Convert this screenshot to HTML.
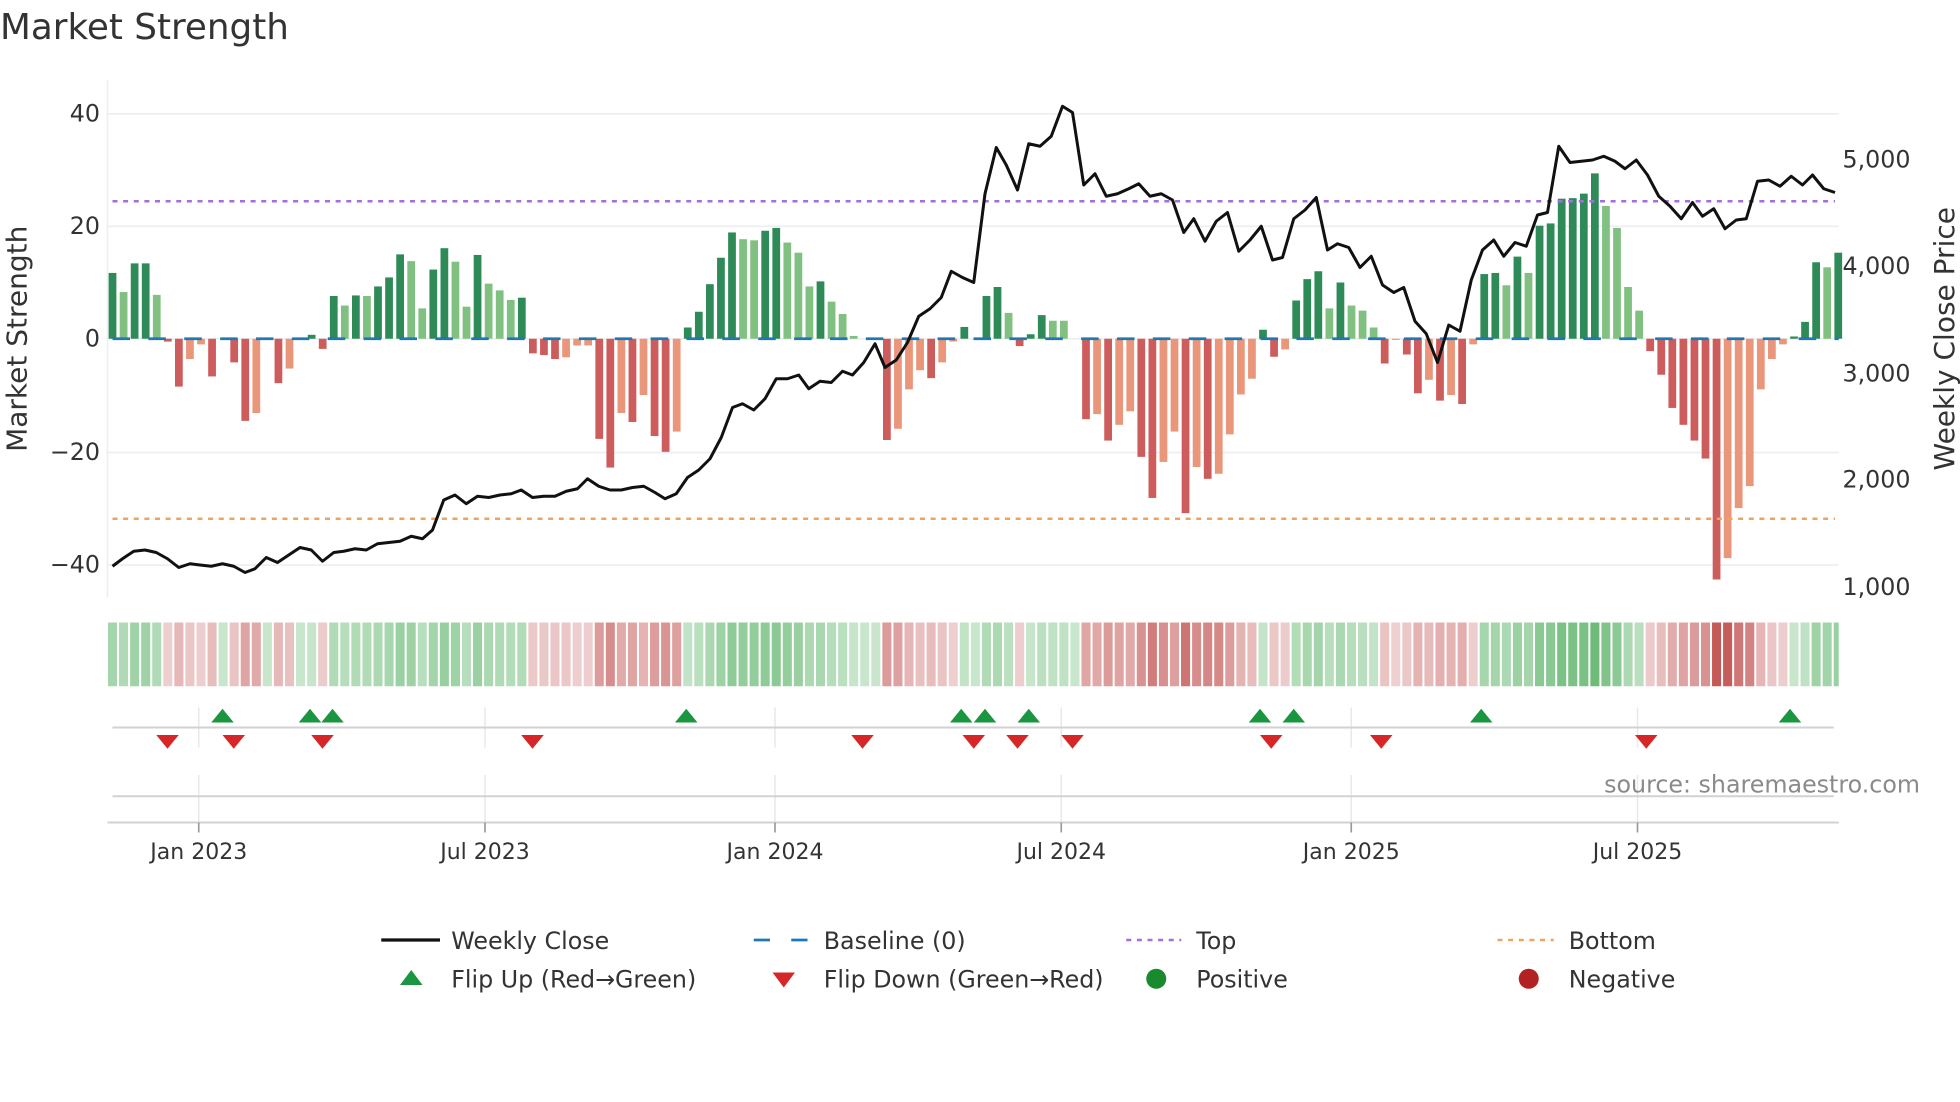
<!DOCTYPE html>
<html><head><meta charset="utf-8"><style>
html,body{margin:0;padding:0;background:#fff;}
svg{display:block;font-family:"DejaVu Sans","Liberation Sans",sans-serif;}
</style></head><body>
<svg id="s" width="1960" height="1102" viewBox="0 0 1568 881.6" xmlns="http://www.w3.org/2000/svg">
<text x="0" y="31" font-size="28.6" fill="#333">Market Strength</text>
<g stroke="#eceef1" stroke-width="1.3">
<line x1="86" y1="91" x2="1471" y2="91"/><line x1="86" y1="181" x2="1471" y2="181"/>
<line x1="86" y1="271" x2="1471" y2="271"/><line x1="86" y1="362" x2="1471" y2="362"/>
<line x1="86" y1="452" x2="1471" y2="452"/><line x1="86" y1="64" x2="86" y2="478"/>
</g>
<g font-size="19" fill="#333" text-anchor="end">
<text x="80" y="97">40</text><text x="80" y="187">20</text><text x="80" y="277">0</text>
<text x="80" y="368">−20</text><text x="80" y="458">−40</text></g>
<g font-size="19" fill="#333">
<text x="1474" y="134">5,000</text><text x="1474" y="219">4,000</text><text x="1474" y="305">3,000</text>
<text x="1474" y="390">2,000</text><text x="1474" y="476">1,000</text></g>
<text transform="translate(21,271) rotate(-90)" font-size="22.4" fill="#333" text-anchor="middle">Market Strength</text>
<text transform="translate(1563,271) rotate(-90)" font-size="22.4" fill="#333" text-anchor="middle">Weekly Close Price</text>
<g id="bars"></g>
<line x1="90" y1="271" x2="1471" y2="271" stroke="#1f77b4" stroke-width="2.2" stroke-dasharray="14,14.7"/>
<line x1="90" y1="161" x2="1468" y2="161" stroke="#a36ee0" stroke-width="2" stroke-dasharray="4,4.5"/>
<line x1="90" y1="415" x2="1468" y2="415" stroke="#f0a35e" stroke-width="2" stroke-dasharray="4,4.5"/>
<polyline fill="none" stroke="#111" stroke-width="2.4" stroke-linejoin="round" points="90,453 98,447 107,441 116,440 125,442 134,447 143,454 152,451 160,452 169,453 178,451 187,453 196,458 204,455 213,446 222,450 231,444 240,438 249,440 258,449 267,442 275,441 284,439 293,440 302,435 311,434 320,433 329,429 338,431 346,424 355,400 364,396 373,403 382,397 391,398 400,396 409,395 417,392 426,398 435,397 444,397 453,393 462,391 470,383 479,389 488,392 497,392 506,390 515,389 524,394 532,399 541,395 550,382 559,376 568,367 577,350 586,326 594,323 603,328 612,319 621,303 630,303 639,300 647,311 656,305 665,306 674,297 682,300 691,290 700,275 708,294 717,288 726,274 735,253 744,247 753,238 761,217 770,222 779,226 788,155 797,118 805,132 814,152 823,115 832,117 841,109 850,85 858,90 867,148 876,139 885,157 894,155 903,151 911,147 920,157 929,155 938,160 947,186 955,175 964,193 973,177 982,170 991,201 1000,192 1009,181 1018,208 1026,206 1035,175 1044,168 1053,158 1062,200 1070,195 1079,198 1088,214 1097,205 1106,228 1115,234 1123,230 1132,257 1141,267 1150,290 1159,260 1168,265 1177,224 1186,200 1195,192 1203,205 1212,194 1221,197 1230,172 1238,170 1247,117 1256,130 1265,129 1274,128 1283,125 1292,129 1300,135 1309,128 1318,140 1327,157 1336,165 1345,175 1354,162 1362,173 1371,167 1380,183 1389,176 1397,175 1406,145 1415,144 1424,149 1433,141 1442,148 1450,140 1459,151 1468,154"/>
<g id="heat"></g>
<g stroke="#e6e8ec" stroke-width="1.2">
<line x1="159" y1="566" x2="159" y2="598"/><line x1="388" y1="566" x2="388" y2="598"/><line x1="620" y1="566" x2="620" y2="598"/><line x1="849" y1="566" x2="849" y2="598"/><line x1="1081" y1="566" x2="1081" y2="598"/><line x1="1310" y1="566" x2="1310" y2="598"/>
<line x1="159" y1="620" x2="159" y2="658"/><line x1="388" y1="620" x2="388" y2="658"/><line x1="620" y1="620" x2="620" y2="658"/><line x1="849" y1="620" x2="849" y2="658"/><line x1="1081" y1="620" x2="1081" y2="658"/><line x1="1310" y1="620" x2="1310" y2="658"/>
</g>
<g stroke="#d0d2d6" stroke-width="1.6">
<line x1="90" y1="582" x2="1467" y2="582"/><line x1="90" y1="637" x2="1467" y2="637"/><line x1="86" y1="658" x2="1471" y2="658"/>
</g>
<g stroke="#999" stroke-width="1.3">
<line x1="159" y1="658" x2="159" y2="666"/><line x1="388" y1="658" x2="388" y2="666"/><line x1="620" y1="658" x2="620" y2="666"/><line x1="849" y1="658" x2="849" y2="666"/><line x1="1081" y1="658" x2="1081" y2="666"/><line x1="1310" y1="658" x2="1310" y2="666"/>
</g>
<g id="mk"></g>
<text x="1536" y="634" font-size="19" fill="#8a8a8a" text-anchor="end">source: sharemaestro.com</text>
<g font-size="17.6" fill="#333" text-anchor="middle">
<text x="159" y="687">Jan 2023</text><text x="388" y="687">Jul 2023</text><text x="620" y="687">Jan 2024</text>
<text x="849" y="687">Jul 2024</text><text x="1081" y="687">Jan 2025</text><text x="1310" y="687">Jul 2025</text></g>
<g font-size="19" fill="#333">
<line x1="305" y1="752" x2="352" y2="752" stroke="#111" stroke-width="2.6"/>
<text x="361" y="759">Weekly Close</text>
<line x1="603" y1="752" x2="647" y2="752" stroke="#1f77b4" stroke-width="2.2" stroke-dasharray="13,17"/>
<text x="659" y="759">Baseline (0)</text>
<line x1="901" y1="752" x2="945" y2="752" stroke="#a36ee0" stroke-width="2" stroke-dasharray="4,4.5"/>
<text x="957" y="759">Top</text>
<line x1="1198" y1="752" x2="1243" y2="752" stroke="#f0a35e" stroke-width="2" stroke-dasharray="4,4.5"/>
<text x="1255" y="759">Bottom</text>
<polygon points="320,788 338,788 329,776" fill="#1a9641"/>
<text x="361" y="790">Flip Up (Red→Green)</text>
<polygon points="618,778 636,778 627,790" fill="#d62728"/>
<text x="659" y="790">Flip Down (Green→Red)</text>
<circle cx="925" cy="783" r="8" fill="#1a8a2e"/>
<text x="957" y="790">Positive</text>
<circle cx="1223" cy="783" r="8" fill="#b22222"/>
<text x="1255" y="790">Negative</text>
</g>
</svg>
<script>
var d=[[11.7,1],[8.3,0],[13.4,1],[13.4,1],[7.8,0],[-0.5,1],[-8.5,1],[-3.6,0],[-1,0],[-6.7,1],[0,0],[-4.2,1],[-14.6,1],[-13.2,0],[0,0],[-7.9,1],[-5.3,0],[0,0],[0.7,1],[-1.8,1],[7.6,1],[5.9,0],[7.7,1],[7.6,0],[9.3,1],[10.9,1],[15,1],[13.8,0],[5.4,0],[12.3,1],[16.1,1],[13.7,0],[5.7,0],[14.9,1],[9.8,0],[8.6,0],[6.9,0],[7.3,1],[-2.6,1],[-2.9,1],[-3.6,1],[-3.3,0],[-1.2,0],[-1.2,0],[-17.8,1],[-22.9,1],[-13.2,0],[-14.8,1],[-10,0],[-17.3,1],[-20.1,1],[-16.5,0],[2,1],[4.8,1],[9.7,1],[14.4,1],[18.9,1],[17.7,0],[17.5,0],[19.2,1],[19.7,1],[17.1,0],[15.3,0],[9.3,0],[10.2,1],[6.6,0],[4.4,0],[0.5,0],[0,0],[0,0],[-18,1],[-16,0],[-9,0],[-5.6,0],[-7,1],[-4.2,0],[-0.5,0],[2.1,1],[0,0],[7.6,1],[9.2,1],[4.6,0],[-1.3,1],[0.8,1],[4.2,1],[3.2,0],[3.2,0],[0,0],[-14.3,1],[-13.4,0],[-18.1,1],[-15.3,0],[-12.9,0],[-21,1],[-28.3,1],[-21.9,0],[-16.5,0],[-31,1],[-22.8,0],[-24.9,1],[-24,0],[-17,0],[-9.9,0],[-7.1,0],[1.6,1],[-3.2,1],[-1.9,0],[6.8,1],[10.6,1],[12,1],[5.4,0],[10,1],[5.9,0],[5,0],[2,0],[-4.4,1],[-0.2,0],[-2.8,1],[-9.7,1],[-7.3,0],[-11,1],[-10,0],[-11.6,1],[-1,0],[11.5,1],[11.7,1],[9.5,0],[14.6,1],[11.7,0],[20.1,1],[20.5,1],[24.9,1],[25,1],[25.8,1],[29.4,1],[23.6,0],[19.7,0],[9.2,0],[5,0],[-2.2,1],[-6.4,1],[-12.3,1],[-15.3,1],[-18.1,1],[-21.3,1],[-42.8,1],[-39,0],[-30.1,0],[-26.2,0],[-9,0],[-3.6,0],[-1,0],[0.4,1],[3,1],[13.6,1],[12.7,0],[15.3,1]];
var NS="http://www.w3.org/2000/svg",b=document.getElementById("bars"),h=document.getElementById("heat"),m=document.getElementById("mk");
function el(p,t,a){var e=document.createElementNS(NS,t);for(var k in a)e.setAttribute(k,a[k]);p.appendChild(e);return e;}
function mix(a,c,t){var r=[];for(var i=0;i<3;i++)r.push(Math.round(a[i]+(c[i]-a[i])*t));return "rgb("+r.join(",")+")";}
var sp=8.85;
for(var i=0;i<d.length;i++){var v=d[i][0],dk=d[i][1],x=90+i*sp,w=6.2;
 if(v!==0){var y=271-v*4.5,c;
  if(v>0)c=dk?"#2e8b57":"#80c080";else c=dk?"#cd5c5c":"#e9967a";
  el(b,"rect",{x:x-w/2,y:Math.min(y,271),width:w,height:Math.abs(v*4.5),fill:c});}
 var t,col;
 if(v>=0){t=Math.min(v/30,1);col=mix([216,238,219],[109,187,120],0.15+0.85*t);}
 else{t=Math.min(-v/40,1);col=mix([243,222,222],[196,90,88],0.1+0.9*t);}
 var x0=x-sp/2+0.8,wd=sp-1.6;if(x0+wd>1471)wd=1471-x0;
 el(h,"rect",{x:x0,y:498,width:wd,height:51,fill:col});
}
[178,248,266,549,769,788,823,1008,1035,1185,1432].forEach(function(x){el(m,"polygon",{points:(x-9)+",578 "+(x+9)+",578 "+x+",567",fill:"#1a9641"});});
[134,187,258,426,690,779,814,858,1017,1105,1317].forEach(function(x){el(m,"polygon",{points:(x-9)+",588 "+(x+9)+",588 "+x+",599",fill:"#d62728"});});
</script>
</body></html>
